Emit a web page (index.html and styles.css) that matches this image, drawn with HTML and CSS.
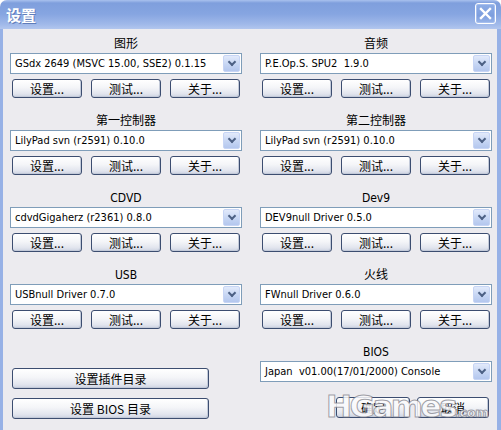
FILE: index.html
```html
<!DOCTYPE html>
<html lang="zh-CN">

<head>
    <meta charset="UTF-8">
    <title>设置</title>
    <link rel="stylesheet" href="styles.css">
</head>

<body>
    <div class="window">
        <div class="titlebar">
            <span class="title">设置</span>
            <span class="close">
                <svg width="13" height="13" viewBox="0 0 13 13">
                    <path d="M2 2 L11 11 M11 2 L2 11" stroke="#fff" stroke-width="2.4" stroke-linecap="square" />
                </svg>
            </span>
        </div>
        <div class="content">
            <div class="plugins">
                <div class="plugin">
                    <div class="plugin-name">图形</div>
                    <div class="combo"><span class="combo-text">GSdx 2649 (MSVC 15.00, SSE2) 0.1.15</span><span class="combo-arrow"></span></div>
                    <div class="plugin-buttons"><span class="btn">设置...</span><span class="btn">测试...</span><span class="btn">关于...</span></div>
                </div>
                <div class="plugin">
                    <div class="plugin-name">音频</div>
                    <div class="combo"><span class="combo-text">P.E.Op.S. SPU2&nbsp; 1.9.0</span><span class="combo-arrow"></span></div>
                    <div class="plugin-buttons"><span class="btn">设置...</span><span class="btn">测试...</span><span class="btn">关于...</span></div>
                </div>
                <div class="plugin">
                    <div class="plugin-name">第一控制器</div>
                    <div class="combo"><span class="combo-text">LilyPad svn (r2591) 0.10.0</span><span class="combo-arrow"></span></div>
                    <div class="plugin-buttons"><span class="btn">设置...</span><span class="btn">测试...</span><span class="btn">关于...</span></div>
                </div>
                <div class="plugin">
                    <div class="plugin-name">第二控制器</div>
                    <div class="combo"><span class="combo-text">LilyPad svn (r2591) 0.10.0</span><span class="combo-arrow"></span></div>
                    <div class="plugin-buttons"><span class="btn">设置...</span><span class="btn">测试...</span><span class="btn">关于...</span></div>
                </div>
                <div class="plugin">
                    <div class="plugin-name">CDVD</div>
                    <div class="combo"><span class="combo-text">cdvdGigaherz (r2361) 0.8.0</span><span class="combo-arrow"></span></div>
                    <div class="plugin-buttons"><span class="btn">设置...</span><span class="btn">测试...</span><span class="btn">关于...</span></div>
                </div>
                <div class="plugin">
                    <div class="plugin-name">Dev9</div>
                    <div class="combo"><span class="combo-text">DEV9null Driver 0.5.0</span><span class="combo-arrow"></span></div>
                    <div class="plugin-buttons"><span class="btn">设置...</span><span class="btn">测试...</span><span class="btn">关于...</span></div>
                </div>
                <div class="plugin">
                    <div class="plugin-name">USB</div>
                    <div class="combo"><span class="combo-text">USBnull Driver 0.7.0</span><span class="combo-arrow"></span></div>
                    <div class="plugin-buttons"><span class="btn">设置...</span><span class="btn">测试...</span><span class="btn">关于...</span></div>
                </div>
                <div class="plugin">
                    <div class="plugin-name">火线</div>
                    <div class="combo"><span class="combo-text">FWnull Driver 0.6.0</span><span class="combo-arrow"></span></div>
                    <div class="plugin-buttons"><span class="btn">设置...</span><span class="btn">测试...</span><span class="btn">关于...</span></div>
                </div>
                <div class="dirs">
                    <span class="btn btn-wide">设置插件目录</span>
                    <span class="btn btn-wide">设置 BIOS 目录</span>
                </div>
                <div class="plugin">
                    <div class="plugin-name">BIOS</div>
                    <div class="combo"><span class="combo-text">Japan&nbsp; v01.00(17/01/2000) Console</span><span class="combo-arrow"></span></div>
                    <div class="dialog-buttons"><span class="btn btn-ok">确定</span><span class="btn btn-cancel">取消</span></div>
                </div>
            </div>
        </div>
        <div class="watermark">HGames<small>.com</small></div>
    </div>
</body>

</html>
```

FILE: styles.css
```css
* {
    margin: 0;
    padding: 0;
    box-sizing: border-box;
}

body {
    width: 501px;
    height: 430px;
    overflow: hidden;
    background: #fff;
    font-family: "DejaVu Sans Condensed", "DejaVu Sans", "Noto Sans CJK SC", sans-serif;
    font-stretch: condensed;
    font-size: 11px;
    color: #000;
}

.window {
    position: relative;
    width: 501px;
    height: 430px;
    display: flex;
    flex-direction: column;
    background: #ecebef;
    border-radius: 7px 7px 0 0;
    overflow: hidden;
}

/* 标题栏 */
.titlebar {
    height: 29px;
    flex: none;
    display: flex;
    align-items: center;
    justify-content: space-between;
    padding: 0 5px 0 6px;
    background: linear-gradient(#a9c1ee 0, #7f9fdd 3px, #86a5e1 14px, #9fb8e9 24px, #b2c6ee 29px);
}

.title {
    font-family: "Noto Sans CJK SC", sans-serif;
    font-weight: bold;
    font-size: 15px;
    color: #fff;
    text-shadow: 1px 1px 0 #5f7cba;
    margin-top: -1px;
}

.close {
    width: 21px;
    height: 21px;
    margin-top: -3px;
    display: flex;
    align-items: center;
    justify-content: center;
    border: 1px solid #fff;
    border-radius: 3px;
    background: linear-gradient(#8eaee6, #7d9ede 60%, #98b4e8);
    box-shadow: inset 0 0 0 1px #a7bfee;
}

.content {
    flex: 1;
    border-left: 3px solid #97b1e6;
    border-right: 4px solid #97b1e6;
    padding: 9px 5px 0 7px;
}

.plugins {
    display: grid;
    grid-template-columns: 232px 232px;
    column-gap: 18px;
    row-gap: 17px;
}

.plugin-name {
    height: 13px;
    line-height: 13px;
    margin-bottom: 2px;
    text-align: center;
    font-size: 12px;
}

/* 下拉框 */
.combo {
    height: 21px;
    display: flex;
    align-items: center;
    border: 1px solid #7f9db9;
    background: #fff;
    padding: 1px;
}

.combo-text {
    flex: 1;
    padding-left: 3px;
    white-space: nowrap;
    overflow: hidden;
}

.combo-arrow {
    width: 17px;
    height: 17px;
    border: 1px solid #c7d5f5;
    border-radius: 2px;
    background: linear-gradient(#e2eafb, #c4d4f3 60%, #b4c7ee);
    position: relative;
}

.combo-arrow::after {
    content: "";
    position: absolute;
    left: 5px;
    top: 3px;
    width: 4px;
    height: 4px;
    border-right: 2px solid #4d6185;
    border-bottom: 2px solid #4d6185;
    transform: rotate(45deg);
}

.plugin-buttons {
    display: flex;
    gap: 9px;
    padding: 0 2px;
    margin-top: 5px;
}

/* 按钮 */
.btn {
    flex: 1;
    height: 19px;
    display: flex;
    align-items: center;
    justify-content: center;
    font-family: "Noto Sans CJK SC", sans-serif;
    font-size: 12px;
    border: 1px solid #3c4d70;
    border-radius: 3px;
    background: linear-gradient(#ffffff, #f4f5f8 45%, #e2e5ee 80%, #cdd3e2);
    box-shadow: inset -1px -1px 0 #c3cad9;
}

.dirs {
    display: flex;
    flex-direction: column;
    gap: 9px;
    padding: 22px 0 0 2px;
}

.btn-wide {
    flex: none;
    width: 197px;
    height: 21px;
}

.dialog-buttons {
    display: flex;
    justify-content: flex-end;
    gap: 7px;
    padding-right: 3px;
    margin-top: 15px;
}

.btn-ok,
.btn-cancel {
    flex: none;
    width: 74px;
    height: 21px;
}

.btn-cancel {
    width: 72px;
}

/* 水印 */
.watermark {
    position: absolute;
    left: 326px;
    top: 388px;
    font-family: "DejaVu Sans", sans-serif;
    font-stretch: normal;
    font-weight: bold;
    font-size: 31px;
    letter-spacing: -2.5px;
    color: rgba(250, 250, 252, 0.85);
    -webkit-text-stroke: 1px rgba(120, 120, 130, 0.7);
    line-height: 36px;
}

.watermark small {
    font-size: 13px;
    letter-spacing: -0.5px;
}
```
